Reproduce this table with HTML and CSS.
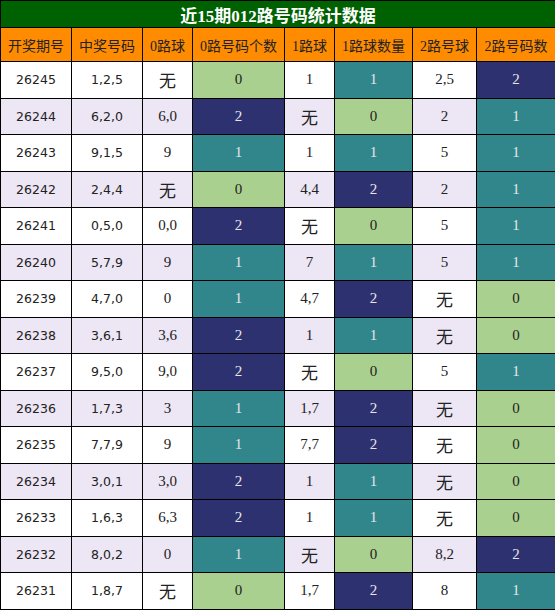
FILE: index.html
```html
<!DOCTYPE html>
<html lang="zh">
<head>
    <meta charset="UTF-8">
    <title>近15期012路号码统计数据</title>
    <link rel="stylesheet" href="styles.css">
</head>
<body>
    <table class="stats">
        <colgroup>
            <col class="c1"><col class="c2"><col class="c3"><col class="c4">
            <col class="c5"><col class="c6"><col class="c7"><col class="c8">
        </colgroup>
        <tr class="title-row">
            <th colspan="8">近15期012路号码统计数据</th>
        </tr>
        <tr class="head-row">
            <th>开奖期号</th>
            <th>中奖号码</th>
            <th>0路球</th>
            <th>0路号码个数</th>
            <th>1路球</th>
            <th>1路球数量</th>
            <th>2路号球</th>
            <th>2路号码数</th>
        </tr>
        <tr>
            <td class="sans">26245</td><td class="sans">1,2,5</td><td class="none">无</td><td class="g">0</td>
            <td>1</td><td class="t">1</td><td>2,5</td><td class="n">2</td>
        </tr>
        <tr class="alt">
            <td class="sans">26244</td><td class="sans">6,2,0</td><td>6,0</td><td class="n">2</td>
            <td class="none">无</td><td class="g">0</td><td>2</td><td class="t">1</td>
        </tr>
        <tr>
            <td class="sans">26243</td><td class="sans">9,1,5</td><td>9</td><td class="t">1</td>
            <td>1</td><td class="t">1</td><td>5</td><td class="t">1</td>
        </tr>
        <tr class="alt">
            <td class="sans">26242</td><td class="sans">2,4,4</td><td class="none">无</td><td class="g">0</td>
            <td>4,4</td><td class="n">2</td><td>2</td><td class="t">1</td>
        </tr>
        <tr>
            <td class="sans">26241</td><td class="sans">0,5,0</td><td>0,0</td><td class="n">2</td>
            <td class="none">无</td><td class="g">0</td><td>5</td><td class="t">1</td>
        </tr>
        <tr class="alt">
            <td class="sans">26240</td><td class="sans">5,7,9</td><td>9</td><td class="t">1</td>
            <td>7</td><td class="t">1</td><td>5</td><td class="t">1</td>
        </tr>
        <tr>
            <td class="sans">26239</td><td class="sans">4,7,0</td><td>0</td><td class="t">1</td>
            <td>4,7</td><td class="n">2</td><td class="none">无</td><td class="g">0</td>
        </tr>
        <tr class="alt">
            <td class="sans">26238</td><td class="sans">3,6,1</td><td>3,6</td><td class="n">2</td>
            <td>1</td><td class="t">1</td><td class="none">无</td><td class="g">0</td>
        </tr>
        <tr>
            <td class="sans">26237</td><td class="sans">9,5,0</td><td>9,0</td><td class="n">2</td>
            <td class="none">无</td><td class="g">0</td><td>5</td><td class="t">1</td>
        </tr>
        <tr class="alt">
            <td class="sans">26236</td><td class="sans">1,7,3</td><td>3</td><td class="t">1</td>
            <td>1,7</td><td class="n">2</td><td class="none">无</td><td class="g">0</td>
        </tr>
        <tr>
            <td class="sans">26235</td><td class="sans">7,7,9</td><td>9</td><td class="t">1</td>
            <td>7,7</td><td class="n">2</td><td class="none">无</td><td class="g">0</td>
        </tr>
        <tr class="alt">
            <td class="sans">26234</td><td class="sans">3,0,1</td><td>3,0</td><td class="n">2</td>
            <td>1</td><td class="t">1</td><td class="none">无</td><td class="g">0</td>
        </tr>
        <tr>
            <td class="sans">26233</td><td class="sans">1,6,3</td><td>6,3</td><td class="n">2</td>
            <td>1</td><td class="t">1</td><td class="none">无</td><td class="g">0</td>
        </tr>
        <tr class="alt">
            <td class="sans">26232</td><td class="sans">8,0,2</td><td>0</td><td class="t">1</td>
            <td class="none">无</td><td class="g">0</td><td>8,2</td><td class="n">2</td>
        </tr>
        <tr>
            <td class="sans">26231</td><td class="sans">1,8,7</td><td class="none">无</td><td class="g">0</td>
            <td>1,7</td><td class="n">2</td><td>8</td><td class="t">1</td>
        </tr>
    </table>
</body>
</html>
```

FILE: styles.css
```css
body {
    margin: 0;
    padding: 0;
    background-color: #fff;
}

.stats {
    width: 555px;
    border-collapse: collapse;
    table-layout: fixed;
    font-family: "Liberation Serif", "Noto Sans CJK SC", serif;
    color: #222;
}

.c1 { width: 71px; }
.c2 { width: 71px; }
.c3 { width: 50px; }
.c4 { width: 92px; }
.c5 { width: 50px; }
.c6 { width: 78px; }
.c7 { width: 64px; }
.c8 { width: 79px; }

.stats th,
.stats td {
    border: 1.5px solid #000;
    text-align: center;
    padding: 0;
}

.title-row th {
    height: 26px;
    background-color: #006100;
    color: #fff;
    font-size: 17px;
    font-weight: bold;
}

.head-row th {
    height: 33px;
    background-color: #ff8c00;
    color: #222;
    font-size: 14px;
    font-weight: normal;
}

.stats td {
    height: 35.5px;
    font-size: 15px;
    background-color: #fff;
}

.stats tr.alt td {
    background-color: #ede6f5;
}

.stats td.sans {
    font-family: "DejaVu Sans", "Liberation Sans", sans-serif;
    font-size: 12.5px;
}

.stats td.none {
    font-family: "Noto Sans CJK SC", sans-serif;
    font-size: 17px;
}

.stats td.g,
.stats tr.alt td.g {
    background-color: #a9d08e;
    color: #222;
}

.stats td.t,
.stats tr.alt td.t {
    background-color: #31868b;
    color: #e6e6e6;
}

.stats td.n,
.stats tr.alt td.n {
    background-color: #2e3170;
    color: #e6e6e6;
}
```
